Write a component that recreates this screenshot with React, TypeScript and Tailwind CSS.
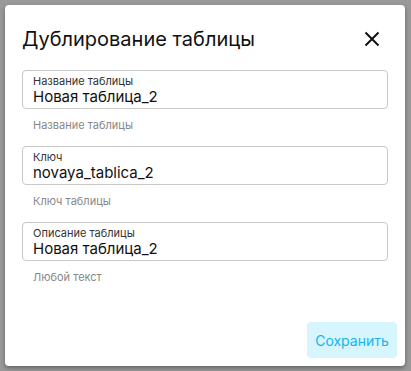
import React from 'react';

const fields = [
  { label: 'Название таблицы', value: 'Новая таблица_2', helper: 'Название таблицы' },
  { label: 'Ключ', value: 'novaya_tablica_2', helper: 'Ключ таблицы' },
  { label: 'Описание таблицы', value: 'Новая таблица_2', helper: 'Любой текст' },
];

export default function App() {
  return (
    <div className="w-[411px] h-[371px] bg-[#999999] p-[5px] font-['Inter',sans-serif]">
      <div className="w-[400px] h-[361px] bg-white rounded-[4px] shadow-[0_2px_4px_rgba(0,0,0,0.35)] flex flex-col">
        <div className="px-[17px] pt-[20px] flex items-center justify-between">
          <h2 className="text-[20px] leading-[28px] text-[#111] font-normal">Дублирование таблицы</h2>
          <svg width="16" height="16" viewBox="0 0 16 16" className="mr-[8px]">
            <path d="M1.5 1.5 L14.5 14.5 M14.5 1.5 L1.5 14.5" stroke="#111" strokeWidth="2" />
          </svg>
        </div>

        <div className="px-[17px] pt-[17px] flex flex-col">
          {fields.map((f) => (
            <div key={f.helper} className="mb-[13px]">
              <div className="h-[39px] border border-[#c8c8c8] rounded-[4px] px-[10px] pt-[4px]">
                <div className="text-[11px] leading-[13px] text-[#333]">{f.label}</div>
                <div className="text-[15px] leading-[18px] text-[#111]">{f.value}</div>
              </div>
              <div className="pt-[8px] px-[11px] text-[11px] leading-[16px] text-[#888]">{f.helper}</div>
            </div>
          ))}
        </div>

        <div className="mt-auto flex justify-end p-[8px]">
          <button className="w-[90px] h-[36px] rounded-[4px] bg-[#d7f5fd] text-[#12b5ef] text-[14px]">
            Сохранить
          </button>
        </div>
      </div>
    </div>
  );
}
